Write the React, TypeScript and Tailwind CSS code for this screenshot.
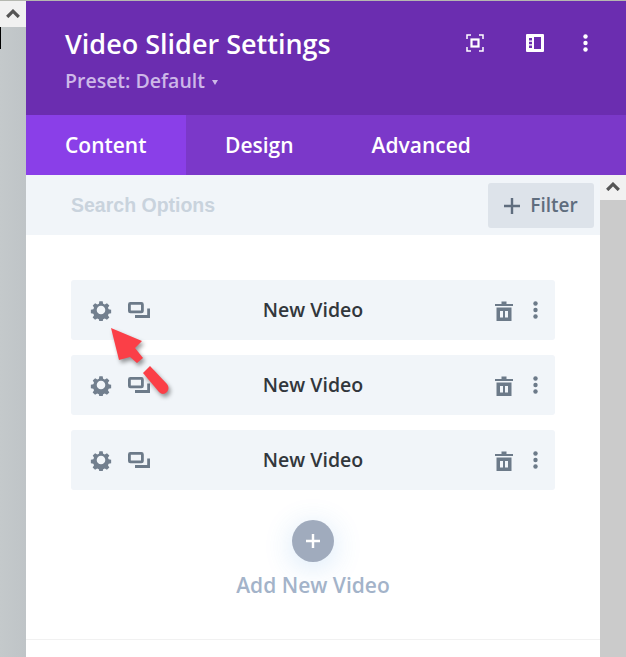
const GearIcon = () => (
  <svg width="22" height="22" viewBox="0 0 24 24" fill="#727f8e">
    <path fillRule="evenodd" d="M10 1.500h4l.6 3 2 .9 2.600-1.700 2.900 2.900-1.700 2.600.9 2 3 .6v4l-3 .6-.9 2 1.700 2.600-2.900 2.900-2.600-1.700-2 .9-.6 3h-4l-.6-3-2-.9-2.600 1.700-2.900-2.900 1.700-2.600-.9-2-3-.6v-4l3-.6.9-2L2 6.600l2.900-2.900 2.600 1.700 2-.9.500-3zM12 6.800a5.200 5.200 0 1 0 0 10.400 5.200 5.200 0 0 0 0-10.400z" transform="translate(1.200 1.200) scale(.9)" />
  </svg>
)

const CopyIcon = () => (
  <svg width="22" height="16" viewBox="0 0 22 16" fill="none" stroke="#6c7a89" strokeWidth="2.800">
    <rect x="1.400" y="1.400" width="13" height="8.500" rx="1" />
    <path d="M20.600 6.500v8H7" />
  </svg>
)

const TrashIcon = () => (
  <svg width="18" height="22" viewBox="0 0 18 22" fill="#6c7a89">
    <path d="M0 5h18v2H0zM6.500 2.500h5V5h-5z" />
    <path fillRule="evenodd" d="M1.500 8.500h15V22h-15zM5 12v6.500h3V12zM10 12v6.500h3V12z" />
  </svg>
)

const DotsIcon = ({ color = "#6c7a89", size = 5 }: { color?: string; size?: number }) => (
  <svg width={size} height="18" viewBox="0 0 5 18" fill={color}>
    <circle cx="2.500" cy="2.500" r="2.200" />
    <circle cx="2.500" cy="9" r="2.200" />
    <circle cx="2.500" cy="15.500" r="2.200" />
  </svg>
)

const Chevron = () => (
  <svg width="14" height="9" viewBox="0 0 14 9" fill="none" stroke="#555" strokeWidth="3.200">
    <path d="M1.200 8 7 2.200 12.800 8" />
  </svg>
)

const VideoRow = () => (
  <div className="h-[60px] bg-[#f1f5f9] rounded-[3px] flex items-center pl-[19px] pr-[17px]">
    <GearIcon />
    <div className="ml-[16px] flex"><CopyIcon /></div>
    <div className="flex-1 text-center text-[19.500px] font-semibold text-[#32373c] pr-[19px]">New Video</div>
    <TrashIcon />
    <div className="ml-[20px] flex"><DotsIcon /></div>
  </div>
)

const App = () => {
  return (
    <div className="relative w-[626px] h-[657px] overflow-hidden flex bg-[#c6cacc] font-['Open_Sans',sans-serif] border-t border-[#b5b8b0]">
      <div className="w-[26px] shrink-0 bg-gradient-to-r from-[#c4c9cb] to-[#bfc4c7]">
        <div className="h-[26px] pb-[2px] bg-[#f1f1f1] flex items-center justify-center"><Chevron /></div>
        <div className="w-[1px] h-[22px] bg-black" />
      </div>

      <div className="w-[600px] shrink-0 flex flex-col">
        <div className="h-[114px] bg-[#6b2db0] pl-[39px] pr-[38px] flex justify-between">
          <div className="pt-[25px]">
            <div className="text-[27px] leading-[36px] font-semibold text-white">Video Slider Settings</div>
            <div className="mt-[7px] text-[19.500px] leading-[24px] font-semibold text-[#cdb8e8] flex items-center">
              Preset: Default
              <span className="ml-[7px] mt-[2px] w-0 h-0 border-x-[3.500px] border-x-transparent border-t-[5px] border-t-[#cdb8e8]" />
            </div>
          </div>
          <div className="flex items-start pt-[33px]">
            <svg width="18" height="18" viewBox="0 0 18 18" fill="none" stroke="white" strokeWidth="1.500">
              <path d="M1 5V1h4M13 1h4v4M17 13v4h-4M5 17H1v-4" />
              <rect x="5.500" y="5.500" width="7" height="7" strokeWidth="2.200" />
            </svg>
            <svg className="ml-[42px]" width="18" height="18" viewBox="0 0 18 18" fill="white">
              <path fillRule="evenodd" d="M1 0h16a1 1 0 0 1 1 1v16a1 1 0 0 1-1 1H1a1 1 0 0 1-1-1V1a1 1 0 0 1 1-1zM8 3v12h7V3zM3 4v2.500h3V4zM3 7.800v2.500h3V7.800zM3 11.500V14h3v-2.500z" />
            </svg>
            <div className="ml-[39px] flex"><DotsIcon color="white" /></div>
          </div>
        </div>

        <div className="h-[60px] bg-[#7b38c9] flex text-[21px] font-semibold text-white">
          <div className="w-[160px] bg-[#8a3fe8] pl-[39px] pt-[2px] flex items-center">Content</div>
          <div className="pl-[39px] pt-[2px] flex items-center">Design</div>
          <div className="pl-[78px] pt-[2px] flex items-center">Advanced</div>
        </div>

        <div className="flex flex-1">
          <div className="w-[574px] shrink-0 bg-white flex flex-col">
            <div className="h-[60px] bg-[#f1f5f9] flex justify-between items-start pt-[8px] pl-[45px] pr-[6px]">
              <div className="mt-[9px] text-[19.500px] leading-[26px] font-bold text-[#c9d3dd] font-['Liberation_Sans',sans-serif]">Search Options</div>
              <div className="w-[106px] h-[45px] rounded-[3px] bg-[#dde3ea] flex items-center justify-center text-[19px] font-semibold text-[#5f6d7e]">
                <svg width="16" height="16" viewBox="0 0 16 16" fill="#5f6d7e">
                  <path d="M6.800 0h2.400v6.800H16v2.400H9.200V16H6.800V9.200H0V6.800h6.800z" />
                </svg>
                <span className="ml-[10px]">Filter</span>
              </div>
            </div>

            <div className="pt-[45px] px-[45px] flex flex-col gap-[15px]">
              <VideoRow />
              <VideoRow />
              <VideoRow />
            </div>

            <div className="mt-[30px] flex flex-col items-center">
              <div className="w-[42px] h-[42px] rounded-full bg-[#a0abbd] shadow-[0_5px_30px_rgba(43,135,218,0.2)] flex items-center justify-center">
                <svg width="14" height="14" viewBox="0 0 16 16" fill="white">
                  <path d="M6.600 0h2.800v6.600H16v2.800H9.400V16H6.600V9.400H0V6.600h6.600z" />
                </svg>
              </div>
              <div className="mt-[8px] text-[21px] leading-[30px] font-semibold text-[#a3b3c9]">Add New Video</div>
            </div>

            <div className="mt-[39px] border-t border-[#f1f1f1]" />
          </div>

          <div className="w-[26px] shrink-0 bg-[#cbcbcb]">
            <div className="h-[25px] pb-[2px] bg-[#f1f1f1] flex items-center justify-center"><Chevron /></div>
          </div>
        </div>
      </div>

      {/* red arrow drawn over the first rows */}
      <svg className="absolute left-[105px] top-[320px] drop-shadow-[2px_3px_2px_rgba(0,0,0,0.4)]" width="70" height="80" viewBox="0 0 70 80" fill="#fb3f47">
        <path d="M6 7 37 20 30 27 38 37 32 42 25 36 14 39z" />
        <path d="M45 45 38 52 54 71Q58 75 62 71 65 67 62 63z" />
      </svg>
    </div>
  )
}

export default App
